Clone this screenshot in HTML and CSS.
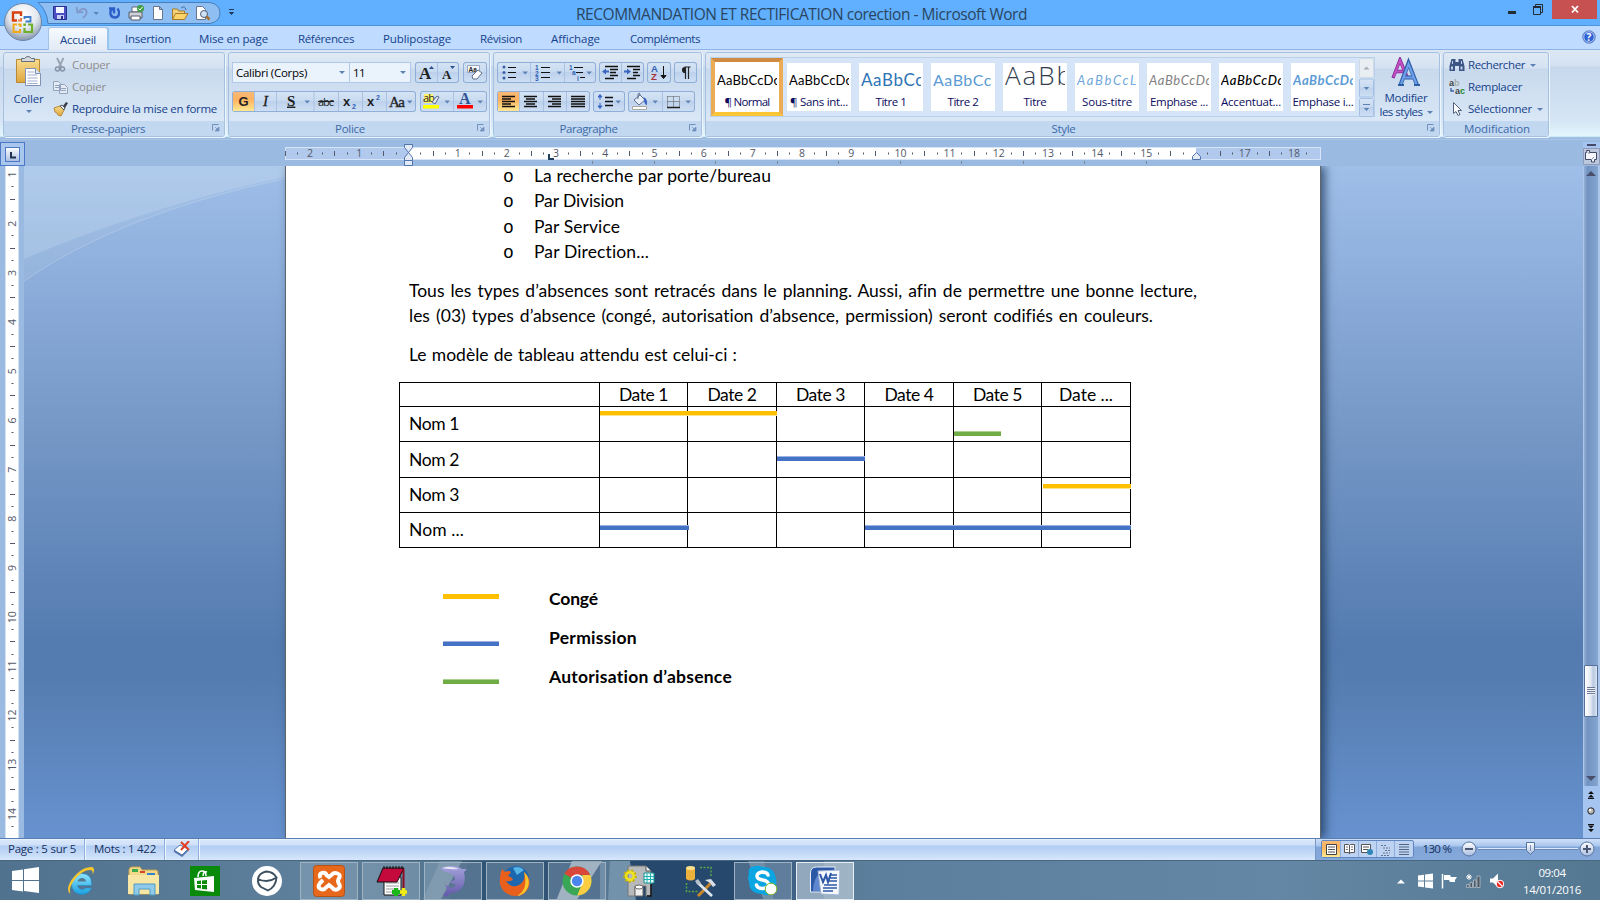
FILE: index.html
```html
<!DOCTYPE html>
<html lang="fr">
<head>
<meta charset="utf-8">
<title>RECOMMANDATION ET RECTIFICATION corection - Microsoft Word</title>
<link rel="stylesheet" href="styles.css">
</head>
<body>
<svg class="defs" width="0" height="0">
  <defs>
    <radialGradient id="orb" cx=".5" cy=".3" r=".7"><stop offset="0" stop-color="#fff"/><stop offset=".55" stop-color="#e3e8ef"/><stop offset="1" stop-color="#8595ab"/></radialGradient>
    <linearGradient id="steel" x1="0" y1="0" x2="0" y2="1"><stop offset="0" stop-color="#fff"/><stop offset="1" stop-color="#a9bde0"/></linearGradient>
    <linearGradient id="btnbg" x1="0" y1="0" x2="0" y2="1"><stop offset="0" stop-color="#d6e4f5"/><stop offset=".45" stop-color="#c9dbf0"/><stop offset=".5" stop-color="#bdd1ec"/><stop offset="1" stop-color="#cfe0f4"/></linearGradient>
    <linearGradient id="hot" x1="0" y1="0" x2="0" y2="1"><stop offset="0" stop-color="#f7b977"/><stop offset=".4" stop-color="#fdb25e"/><stop offset="1" stop-color="#ffe892"/></linearGradient>
    <linearGradient id="gold" x1="0" y1="0" x2="0" y2="1"><stop offset="0" stop-color="#f8dc8f"/><stop offset="1" stop-color="#dfa63c"/></linearGradient>
    <linearGradient id="ieb" x1="0" y1="0" x2="0" y2="1"><stop offset="0" stop-color="#8fe6ff"/><stop offset="1" stop-color="#1a9fe0"/></linearGradient>
    <linearGradient id="dol" x1="0" y1="0" x2="0" y2="1"><stop offset="0" stop-color="#a3a3dc"/><stop offset="1" stop-color="#6257a8"/></linearGradient>
    <path id="car" d="M-2.500-1h5.400L.2 2z" fill="#5c81b5"/>
    <g id="launch"><path d="M.5 6.500v-6h6" fill="none" stroke="#6f8fbd"/><path d="M3 3l3 3M7 3v4H3z" fill="#6f8fbd" stroke="#6f8fbd" stroke-width=".7"/></g>
  </defs>
</svg>

<header class="titlebar">
  <svg class="qat" width="250" height="26" viewBox="0 0 250 26">
    <path d="M38 2.500h172q10 2 10 10.500t-10 10.500H48q-1-13-10-21z" fill="#8fbff2" stroke="#477fbc"/>
    <g transform="translate(53 6)"><path d="M.5.500h13v13H2l-1.500-1.500z" fill="#4a4fc4" stroke="#28308c"/><path d="M3 1h8v6H3z" fill="#f3f6ff"/><path d="M4 9h7v4H4z" fill="#c9cff2"/><path d="M8 10h2v3H8z" fill="#28308c"/></g>
    <path d="M79 11q4-4 7-1 2 4-3 8M76.500 7l1 5.500 5.500-.5" fill="none" stroke="#8199cb" stroke-width="2"/>
    <use href="#car" x="96" y="13"/>
    <path d="M117.500 8.500c3 4 1.500 9-2.500 9-5 0-6-6-2.500-9M109 8.500h5v5" fill="none" stroke="#2d5fc8" stroke-width="2.400"/>
    <g transform="translate(128 6)"><path d="M4 1h7v5H4z" fill="#fff" stroke="#667"/><path d="M1 6h13v6H1z" fill="#cfd3d9" stroke="#555b66"/><path d="M3 10h9v4H3z" fill="#fff" stroke="#555b66"/><circle cx="12.500" cy="2.500" r="3.500" fill="#3e9d42"/><path d="M10.500 2.500l1.500 1.500 2.500-3" fill="none" stroke="#fff"/></g>
    <path d="M153.500 6.500h6l3 3v10h-9zM159.500 6.500v3h3" fill="#fff" stroke="#69758b"/>
    <g transform="translate(172 6)"><path d="M.5 13V3h5l1 2h6v3" fill="#f5d07a" stroke="#a87928"/><path d="M.5 13.500l3-6H16l-3.500 6z" fill="#fbd469" stroke="#a87928"/><path d="M9 2q4-3 5 2" fill="none" stroke="#3c6dad"/></g>
    <g transform="translate(196 6)"><path d="M.5.500h6l3 3v10h-9z" fill="#fff" stroke="#69758b"/><circle cx="8" cy="8" r="3.500" fill="#cfe3f7" stroke="#4d5d76"/><path d="M10.500 10.500l3 3" stroke="#a86f2c" stroke-width="2.500"/></g>
    <path d="M229 9.500h5M229.500 12.500h4l-2 2z" fill="#23395d" stroke="#23395d"/>
  </svg>
  <div class="caption"><span data-w="451">RECOMMANDATION ET RECTIFICATION corection - Microsoft Word</span></div>
  <svg class="winbtns" width="100" height="26" viewBox="0 0 100 26">
    <path d="M8 11h8v3H8z" fill="#222b36"/>
    <path d="M33.500 6.500h7v8h-7zM35.500 6V4.500h7v8H41" fill="none" stroke="#222b36"/><path d="M33 6h8v2h-8z" fill="#222b36"/>
    <path d="M52 0h45v19H52z" fill="#c75050"/><path d="M72 6l6 6.500m0-6.500l-6 6.500" stroke="#fff" stroke-width="1.800"/>
  </svg>
</header>

<nav class="tabs">
  <a class="tab on"><span data-w="36">Accueil</span></a>
  <a class="tab t2"><span data-w="46">Insertion</span></a>
  <a class="tab t3"><span data-w="69">Mise en page</span></a>
  <a class="tab t4"><span data-w="56">Références</span></a>
  <a class="tab t5"><span data-w="68">Publipostage</span></a>
  <a class="tab t6"><span data-w="42">Révision</span></a>
  <a class="tab t7"><span data-w="49">Affichage</span></a>
  <a class="tab t8"><span data-w="70">Compléments</span></a>
  <svg class="help" width="14" height="14" viewBox="0 0 14 14"><circle cx="7" cy="7" r="6.300" fill="#2f63d4" stroke="#7894c6"/><circle cx="7" cy="7" r="5.200" fill="none" stroke="#dce8ff" stroke-width=".7"/><text x="7" y="10.800" class="q">?</text></svg>
</nav>
<svg class="orb" width="40" height="40" viewBox="0 0 40 40">
  <circle cx="20" cy="20" r="18.500" fill="url(#orb)" stroke="#6c84a6"/>
  <g fill="none"><path d="M18 14v-3.500H10v8h4" stroke="#d6430f" stroke-width="2.400"/><path d="M15 18.500h3V16" stroke="#ef7b3c" stroke-width="2"/><path d="M21.500 17v-2h6v4.500h-5" stroke="#3d7cc9" stroke-width="1.800"/><path d="M14 22.500h-3.500v7.500H17v-3M15 22.500h2.500V25" stroke="#f2a916" stroke-width="2"/><path d="M25 22.500h4v7.500H21.500v-4M21.500 24v-1.500H23" stroke="#6eaf2a" stroke-width="2.200"/></g>
</svg>

<section class="ribbon">
  <div class="group g1">
    <div class="gbody clip">
      <div class="paste">
        <svg width="30" height="33" viewBox="0 0 30 33"><path d="M2.500 3.500h23v23h-23z" fill="url(#gold)" stroke="#b98a35"/><path d="M7.500 5.500v-3h3q3.500-4 7 0h3v3z" fill="#d6d9de" stroke="#666d78"/><path d="M11.500 12.500h10l5 5v12h-15z" fill="#fff" stroke="#7f92b5"/><path d="M13.500 16h7m-7 3h10m-10 3h10m-10 3h10m-10 2.500h10" stroke="#9dadd0"/><path d="M21.500 12.500v5h5" fill="#dfe7f5" stroke="#7f92b5"/></svg>
        <span data-w="30">Coller</span><i class="caret"></i>
      </div>
      <div class="cmds">
        <p class="dim"><svg width="16" height="16" viewBox="0 0 16 16"><path d="M4 1l4.500 9M10.500 1L6 10" stroke="#97a2b3" stroke-width="1.800"/><circle cx="4.500" cy="12" r="2" fill="none" stroke="#8792a5" stroke-width="1.400"/><circle cx="9.500" cy="12" r="2" fill="none" stroke="#8792a5" stroke-width="1.400"/></svg><span data-w="38">Couper</span></p>
        <p class="dim"><svg width="16" height="16" viewBox="0 0 16 16"><path d="M.5 2.500h5l2 2v7h-7zM6.500 5.500h5l3 3v6h-8z" fill="#e4ebf5" stroke="#93a3bd"/><path d="M2 6.500h4m-4 2h4m2 1h5m-5 2h5" stroke="#93a3bd"/></svg><span data-w="34">Copier</span></p>
        <p><svg width="16" height="16" viewBox="0 0 16 16"><path d="M1 7l6-2 4 4-3 6-3-1-1-2-2-1z" fill="url(#gold)" stroke="#b98a35"/><path d="M7 5l2-1 3 3-1 2z" fill="#e9edf5" stroke="#555"/><path d="M10 5l3-4 2 1-3 5z" fill="#3b3e48"/></svg><span data-w="145">Reproduire la mise en forme</span></p>
      </div>
    </div>
    <div class="glabel"><span data-w="74">Presse-papiers</span><svg width="8" height="8"><use href="#launch"/></svg></div>
  </div>

  <div class="group g2">
    <div class="gbody tools">
      <div class="row">
        <div class="combo c1"><span data-w="71">Calibri (Corps)</span><i class="caret"></i></div>
        <div class="combo c2"><span data-w="12">11</span><i class="caret"></i></div>
        <svg class="bt m3" width="44" height="21" viewBox="0 0 44 21"><text x="4" y="16.500" class="ser s16">A</text><path d="M14 7l2.500-3 2.500 3z" fill="#2e4f8e"/><path d="M22.500 1v19" stroke="#a9c1e2"/><text x="27" y="16.500" class="ser s12">A</text><path d="M35 4h5l-2.500 3z" fill="#2e4f8e"/></svg>
        <svg class="bt m4" width="24" height="21" viewBox="0 0 24 21"><path d="M4.500 3.500h12v7h-12z" fill="#f5f8fd" stroke="#8597b4" stroke-width=".8"/><text x="5.500" y="9.500" class="aa">Aa</text><path d="M9 14l6-6 4 3-5 6h-4z" fill="#fff" stroke="#5f6f8b"/></svg>
      </div>
      <div class="row r2">
        <svg class="bt" width="184" height="21" viewBox="0 0 184 21"><path d="M1 1h21v19H1z" fill="url(#hot)"/><path d="M22.500 1v19M44.500 1v19M82 1v19M106.500 1v19M130.500 1v19M154.500 1v19" stroke="#a9c1e2"/>
          <text x="6.500" y="15" class="bold s13">G</text><text x="31" y="15" class="ser ital s14 lt">I</text><text x="55" y="14.500" class="ser s14 und">S</text><use href="#car" x="75" y="10.500"/>
          <text x="86" y="14.500" class="s11 strike" textLength="16">abc</text><text x="111" y="15" class="bold s13">x</text><text x="120" y="18" class="tiny">2</text><text x="135" y="15" class="bold s13">x</text><text x="144" y="9" class="tiny">2</text><text x="157" y="15.500" class="ser s14 lt" textLength="16">Aa</text><use href="#car" x="177.500" y="10.500"/></svg>
        <svg class="bt m4" width="67" height="21" viewBox="0 0 67 21"><path d="M33.500 1v19" stroke="#a9c1e2"/><path d="M4 3h9v9H4z" fill="#fff26b"/><text x="3" y="11" class="s11" textLength="12">ab</text><path d="M12 11l5-6 2 1-4 7z" fill="#e3e9f3" stroke="#54698d"/><path d="M3 14h16v3.500H3z" fill="#ff0"/><use href="#car" x="27" y="10.500"/><text x="39" y="13" class="ser s15 blue">A</text><path d="M37 14h16v3.500H37z" fill="#f00"/><use href="#car" x="60" y="10.500"/></svg>
      </div>
    </div>
    <div class="glabel"><span data-w="30">Police</span><svg width="8" height="8"><use href="#launch"/></svg></div>
  </div>

  <div class="group g3">
    <div class="gbody tools">
      <div class="row">
        <svg class="bt" width="99" height="21" viewBox="0 0 99 21"><path d="M33.500 1v19M67.500 1v19" stroke="#a9c1e2"/><g fill="#3a5ea8"><circle cx="7" cy="5" r="1.500"/><circle cx="7" cy="10.500" r="1.500"/><circle cx="7" cy="16" r="1.500"/></g><path d="M11 5.500h8m-8 5h8m-8 5h8M44 5.500h9m-9 5h9m-9 5h9M77 5.500h9m-7 5h7m-3 5h5" stroke="#111"/><use href="#car" x="28" y="10.500"/><use href="#car" x="62" y="10.500"/><use href="#car" x="92" y="10.500"/><g class="num"><text x="38" y="8">1</text><text x="38" y="13.500">2</text><text x="38" y="19">3</text><text x="72" y="7.500">1</text><text x="75" y="13">a</text><text x="80" y="18.500">i</text></g></svg>
        <svg class="bt m3" width="45" height="21" viewBox="0 0 45 21"><path d="M22.500 1v19" stroke="#a9c1e2"/><path d="M6 4.500h13M11 7.500h8M11 10.500h6M11 13.500h8M6 16.500h9M28 4.500h13M34 7.500h7M34 10.500h5M34 13.500h7M28 16.500h9" stroke="#111" stroke-width="1.500"/><path d="M3 9.500l4-3v2h3v2H7v2zM32 9.500l-4-3v2h-3v2h3v2z" fill="#3a66c0"/></svg>
        <svg class="bt m3" width="24" height="21" viewBox="0 0 24 21"><text x="4" y="9.500" class="az b">A</text><text x="4" y="18" class="az r">Z</text><path d="M16.500 4v12M14 13.500l2.500 3 2.500-3z" stroke="#111" fill="#111"/></svg>
        <svg class="bt m3" width="23" height="21" viewBox="0 0 23 21"><path d="M10.500 5h6M11 10.500a2.500 2.500 0 010-5zM11.500 5v12M14.500 5v12" fill="#222" stroke="#222" stroke-width="1.200"/></svg>
      </div>
      <div class="row r2">
        <svg class="bt" width="93" height="21" viewBox="0 0 93 21"><path d="M1 1h21v19H1z" fill="url(#hot)"/><path d="M22.500 1v19M46.500 1v19M69.500 1v19" stroke="#a9c1e2"/><path d="M5 5.500h13M5 8h9M5 10.500h13M5 13h9M5 15.500h13M27 5.500h13M29 8h9M27 10.500h13M29 13h9M27 15.500h13M51 5.500h13M55 8h9M51 10.500h13M55 13h9M51 15.500h13M74 5.500h14M74 8h14M74 10.500h14M74 13h14M74 15.500h14" stroke="#111" stroke-width="1.400"/></svg>
        <svg class="bt m3" width="32" height="21" viewBox="0 0 32 21"><path d="M7 4v5M7 12v5M5 6l2-2.500L9 6zM5 15l2 2.500L9 15z" stroke="#3a66c0" fill="#3a66c0"/><path d="M12 6.500h8m-8 4h8m-8 4h8" stroke="#111" stroke-width="1.300"/><use href="#car" x="25" y="10.500"/></svg>
        <svg class="bt m3" width="67" height="21" viewBox="0 0 67 21"><path d="M34.500 1v19" stroke="#a9c1e2"/><path d="M6 9l6-5 5 5-6 5z" fill="#e9eff8" stroke="#5c6f90"/><path d="M10 8V3q2-2 2 1" fill="none" stroke="#5c6f90"/><path d="M15.500 6q4.500 2 3.500 8-2 0-3-4z" fill="#3a66c0"/><path d="M4.500 15.500h14v3h-14z" fill="#fff" stroke="#a8a8a0"/><use href="#car" x="27" y="10.500"/><path d="M39.500 5.500h12v11m-12-11v11m6-11v11m-6-6h12" stroke="#555" stroke-dasharray="1 1" fill="none"/><path d="M39 16.500h13" stroke="#222" stroke-width="1.400"/><use href="#car" x="60" y="10.500"/></svg>
      </div>
    </div>
    <div class="glabel"><span data-w="58">Paragraphe</span><svg width="8" height="8"><use href="#launch"/></svg></div>
  </div>

  <div class="group g4">
    <div class="gbody styles">
      <div class="gallery">
        <div class="st sel"><b class="cal"><span data-w="63">AaBbCcDc</span></b><em><span data-w="45">¶ Normal</span></em></div>
        <div class="st"><b class="cal"><span data-w="63">AaBbCcDc</span></b><em><span data-w="58">¶ Sans int...</span></em></div>
        <div class="st"><b class="h1"><span data-w="63">AaBbCc</span></b><em><span data-w="31">Titre 1</span></em></div>
        <div class="st"><b class="h2"><span data-w="59">AaBbCc</span></b><em><span data-w="31">Titre 2</span></em></div>
        <div class="st"><b class="h0"><span data-w="69">AaBb</span></b><em><span data-w="23">Titre</span></em></div>
        <div class="st"><b class="sub"><span data-w="61">AaBbCcL</span></b><em><span data-w="50">Sous-titre</span></em></div>
        <div class="st"><b class="cal ig"><span data-w="63">AaBbCcDc</span></b><em><span data-w="58">Emphase ...</span></em></div>
        <div class="st"><b class="cal ib"><span data-w="63">AaBbCcDc</span></b><em><span data-w="60">Accentuat...</span></em></div>
        <div class="st"><b class="cal ie"><span data-w="63">AaBbCcDc</span></b><em><span data-w="61">Emphase i...</span></em></div>
        <svg class="gscroll" width="15" height="59" viewBox="0 0 15 59"><rect x=".5" y=".5" width="14" height="19" rx="2" fill="#e9eef3" stroke="#d0dae6"/><rect x=".5" y="21" width="14" height="18" rx="1" fill="url(#btnbg)" stroke="#a5c0e4"/><rect x=".5" y="40.500" width="14" height="18" rx="1" fill="url(#btnbg)" stroke="#a5c0e4"/><path d="M4.500 11.500h6l-3-3z" fill="#a5acb5"/><use href="#car" x="7.300" y="30"/><path d="M4 46.500h7" stroke="#5c81b5"/><use href="#car" x="7.300" y="51"/></svg>
      </div>
      <div class="modif"><svg width="30" height="30" viewBox="0 0 30 30"><g fill="none" stroke="#872c9a" stroke-width="3.400"><path d="M2 21L9 3l7 17M4 14.500h9"/></g><path d="M2.500 20L9 3.500l7 16.500M5 14.500h8" fill="none" stroke="#c14fc2" stroke-width="2"/><path d="M9.500 28L17.500 6 26 28M12.500 20.500h11" fill="none" stroke="#2d5ea8" stroke-width="4"/><path d="M10 27L17.500 7 25.500 27M13 20.500h10" fill="none" stroke="#6da0e8" stroke-width="2.200"/><path d="M7 28h6m10 0h6" stroke="#2d5ea8" stroke-width="2"/></svg><span data-w="43">Modifier</span><div class="ls"><span data-w="43">les styles</span><i class="caret"></i></div></div>
    </div>
    <div class="glabel"><span data-w="24">Style</span><svg width="8" height="8"><use href="#launch"/></svg></div>
  </div>

  <div class="group g5">
    <div class="gbody cmds find">
      <p><svg width="16" height="14" viewBox="0 0 16 14"><path d="M2.500 1h4v3h3V1h4l2 7v5H10V8H6v5H.500V8z" fill="#3e5685"/><path d="M3 3h1v3H3zM12 3h1v3h-1zM2 8.500h2v3H2zM11.500 8.500h2v3h-2z" fill="#c3d2ea"/></svg><span data-w="57">Rechercher</span><i class="caret"></i></p>
      <p><svg width="16" height="16" viewBox="0 0 16 16"><text x="0" y="7" class="ab">a<tspan fill="#aaa">b</tspan></text><text x="6" y="15" class="ab">a<tspan fill="#1d8a2b">c</tspan></text><path d="M2 9v3h3" fill="none" stroke="#3a5ea8" stroke-width="1.300"/></svg><span data-w="54">Remplacer</span></p>
      <p><svg width="16" height="16" viewBox="0 0 16 16"><path d="M4.500 1.500v11l2.500-2 2 4 2-1-2-4h3.500z" fill="#fff" stroke="#50617f"/></svg><span data-w="64">Sélectionner</span><i class="caret"></i></p>
    </div>
    <div class="glabel"><span data-w="66">Modification</span></div>
  </div>
</section>

<div class="rulerbar">
  <div class="corner"><svg width="15" height="15" viewBox="0 0 15 15"><rect x=".5" y=".5" width="14" height="14" fill="url(#steel)" stroke="#4c78c6"/><path d="M6 5v5.500h5" fill="none" stroke="#1f3350" stroke-width="2"/></svg></div>
  <svg id="hruler" width="1040" height="24" viewBox="284 142 1040 24"></svg>
  <svg class="rb" width="17" height="24" viewBox="0 0 17 24"><path d="M0 0h17v6H0z" fill="#a6c4f0"/><path d="M4 2h9v2H4z" fill="#454a68"/><path d="M.5 6.500h16v16H.500z" fill="#bcc7dd" stroke="#8f9bb8"/><path d="M2.500 10.500h1v-2h3v2h7v7h-2v2.500h-3v-2.500h-6z" fill="#f4f6fb" stroke="#3f4a6b"/><path d="M3.500 9l3 3M8 18l3-3" stroke="#8a93a8"/></svg>
</div>

<main class="work">
  <div class="vr"><svg id="vruler" width="14" height="672" viewBox="5 166 14 672"></svg></div>
  <div class="canvas">
    <svg class="swoosh" width="261" height="120" viewBox="24 166 261 120"><path d="M24 166h261v11Q150 206 24 259z" fill="#dcebf2" opacity=".28"/><path d="M24 259Q150 206 285 177v1.500Q120 214 24 281z" fill="#c8dbe0" opacity=".14"/><path d="M24 281Q120 214 285 178.500" fill="none" stroke="#c3d8f0" opacity=".45"/></svg>
    <article class="page">
      <ul class="list">
        <li><span data-w="237">La recherche par porte/bureau</span></li>
        <li><span data-w="90">Par Division</span></li>
        <li><span data-w="86">Par Service</span></li>
        <li><span data-w="115">Par Direction...</span></li>
      </ul>
      <p class="l1">Tous les types d’absences sont retracés dans le planning. Aussi, afin de permettre une bonne lecture,</p>
      <p class="l2">les (03) types d’absence (congé, autorisation d’absence, permission) seront codifiés en couleurs.</p>
      <p class="l3">Le modèle de tableau attendu est celui-ci :</p>
      <table>
        <colgroup><col class="k0"><col class="k1"><col class="k2"><col class="k1"><col class="k2"><col class="k1"><col class="k2"></colgroup>
        <tr class="h"><td></td><td><span data-w="49">Date 1</span></td><td><span data-w="49">Date 2</span></td><td><span data-w="49">Date 3</span></td><td><span data-w="49">Date 4</span></td><td><span data-w="49">Date 5</span></td><td><span data-w="54">Date ...</span></td></tr>
        <tr class="a"><th><span data-w="50">Nom 1</span></th><td><i class="bar y two"></i></td><td></td><td></td><td></td><td><i class="bar g"></i></td><td></td></tr>
        <tr class="b"><th><span data-w="50">Nom 2</span></th><td></td><td></td><td><i class="bar u mid"></i></td><td></td><td></td><td></td></tr>
        <tr class="a"><th><span data-w="50">Nom 3</span></th><td></td><td></td><td></td><td></td><td></td><td><i class="bar y one"></i></td></tr>
        <tr class="a"><th><span data-w="55">Nom ...</span></th><td><i class="bar u low"></i></td><td></td><td></td><td><i class="bar u low three"></i></td><td></td><td></td></tr>
      </table>
      <div class="legend">
        <div><i class="y"></i><span data-w="49">Congé</span></div>
        <div><i class="u"></i><span data-w="88">Permission</span></div>
        <div><i class="g"></i><span data-w="183">Autorisation d’absence</span></div>
      </div>
    </article>
  </div>
  <div class="vscroll">
    <div class="track"><i class="up"></i><div class="thumb"></div><i class="down"></i></div>
    <svg width="17" height="52" viewBox="0 0 17 52"><path d="M5 8l3-3 3 3zM5 11.500l3-3 3 3zM5 12h6v1H5zM5 38h6v1H5zM5 39.500h6l-3 3zM5 43h6l-3 3z" fill="#111"/><circle cx="8" cy="25" r="3.200" fill="#bbb" stroke="#222"/><circle cx="7" cy="24" r="1.200" fill="#fff"/></svg>
  </div>
</main>

<footer class="status">
  <div class="s1"><span data-w="68">Page : 5 sur 5</span></div>
  <div class="s2"><span data-w="62">Mots : 1 422</span></div>
  <div class="s3"><svg width="18" height="16" viewBox="0 0 18 16"><path d="M1 9l6-5 8 4-6 6z" fill="#fff" stroke="#5776ae"/><path d="M1 10l8 5 6-6" fill="none" stroke="#5776ae" stroke-width="1.500"/><path d="M8 1l8 8m0-9L8 9" stroke="#e23f26" stroke-width="2"/></svg></div>
  <div class="sr">
    <svg width="284" height="21" viewBox="1316 839 284 21">
      <rect x="1321.500" y="840.500" width="92" height="17" rx="1.500" fill="#bdd3f1" stroke="#5f86bf"/><path d="M1322 841h18v16h-18z" fill="url(#hot)"/><path d="M1340.500 841v16M1358.500 841v16M1376.500 841v16M1394.500 841v16" stroke="#8daddb"/>
      <path d="M1326.500 844.500h10v10h-10z" fill="#fff" stroke="#444"/><path d="M1328 847h7m-7 2.500h7m-7 2.500h7" stroke="#555"/>
      <path d="M1344.500 844.500h4l1 1 1-1h4v8h-4l-1 1.500-1-1.500h-4zM1349.500 845v8" fill="#fff" stroke="#555"/><path d="M1346 847h2m-2 2.500h2m3-2.500h2m-2 2.500h2" stroke="#777"/>
      <path d="M1361.500 844.500h9v8h-9z" fill="#fff" stroke="#555"/><path d="M1363 847h6m-6 2.500h5" stroke="#555"/><circle cx="1370" cy="852" r="3" fill="#2f86b6"/>
      <path d="M1381 845.500h5m-3 2.500h7m-5 2.500h5m-7 2.500h7m-9 2.500h9" stroke="#66758e" stroke-dasharray="2 1"/>
      <path d="M1399 844.500h10m-10 2.500h10m-10 2.500h10m-10 2.500h10m-10 2.500h10" stroke="#556481"/>
      <text x="1422.500" y="853" textLength="29.500" class="zt">130 %</text>
      <path d="M1478 848.500h100" stroke="#dbe7fa"/><path d="M1478 849.500h100" stroke="#6587bb"/>
      <g stroke="#54739f"><circle cx="1469" cy="849" r="7" fill="url(#steel)"/><circle cx="1587" cy="849" r="7" fill="url(#steel)"/><path d="M1526.500 842.500h8v8l-4 4-4-4z" fill="url(#steel)"/></g>
      <path d="M1465 849h8M1583 849h8M1587 845v8" stroke="#4a5872" stroke-width="2"/><path d="M1530.500 845v6" stroke="#7b93bb"/>
    </svg>
  </div>
</footer>

<div class="taskbar">
  <svg class="photo" width="1600" height="40" viewBox="0 0 1600 40" preserveAspectRatio="none"><path d="M440 0h30l-22 40h-26z" fill="#8199ad" opacity=".5"/><path d="M462 0h138v40H440z" fill="#25486c" opacity=".75"/><path d="M572 0h30l-26 40h-20z" fill="#b9c6d0" opacity=".75"/><path d="M610 0h20l8 40h-30z" fill="#7f9db5" opacity=".7"/><path d="M630 0h118l16 40H636z" fill="#1d3f66" opacity=".85"/><path d="M764 0h60v40h-50z" fill="#34597f" opacity=".7"/></svg>
  <div class="tk n w1"><svg width="27" height="27" viewBox="0 0 27 27"><path d="M0 4l11-1.500V13H0zM12 2.300L27 0v13H12zM0 14h11v10.500L0 23zM12 14h15v12l-15-2z" fill="#fff"/></svg></div>
  <div class="tk n"><svg width="30" height="32" viewBox="0 0 30 32"><path d="M25.500 18q0-9-9.500-9.500Q6 9 5.500 19 6 29 16 29.500q7-.5 9.500-6.500h-6q-4 3.500-7.500-1l-.5-1.500h14z" fill="url(#ieb)" stroke="#2389c4" stroke-width=".6"/><path d="M11.500 16.500q1-3.500 4.500-3.500t4 3.500z" fill="#56788f"/><path d="M4.500 29C-4 24 12 1 26 2q4 1 .5 8 1-5-2.500-5C14 5 1 21 4.500 29z" fill="#f7c62c"/></svg></div>
  <div class="tk n"><svg width="33" height="31" viewBox="0 0 33 31"><path d="M2 5q0-3 3-3h8l2 3h14q2 0 2 3v21H2z" fill="#f2d98a" stroke="#c7a24c"/><path d="M5 4h6v3H5z" fill="#3ca94b"/><path d="M13 6h5v2h-5z" fill="#d9432d"/><path d="M20 8h8v2h-8z" fill="#3480c9"/><path d="M1 10h31v19H1z" fill="#f8e6a5"/><path d="M7 30V19h21v11h-5v-6H12v6z" fill="#8ecbe8" stroke="#4e9ac6"/></svg></div>
  <div class="tk n"><svg width="30" height="30" viewBox="0 0 30 30"><path d="M0 0h30v30H0z" fill="#0a8a0a"/><path d="M4 12l20-2v16L5 24z" fill="#fff"/><path d="M8 11q0-6 4-6t4 5M13 10q0-5 4-4" fill="none" stroke="#fff" stroke-width="1.500"/><path d="M7 15l4-.5v3.500H7zM12 14.500l5-.5v4h-5zM7 19h4v3.500l-4-.5zM12 19h5v4.500l-5-.5z" fill="#0a8a0a"/></svg></div>
  <div class="tk n"><svg width="32" height="32" viewBox="0 0 32 32"><circle cx="16" cy="16" r="15" fill="#fff"/><path d="M7 14q1-6 8-7.500 7 0 10.500 6-5 3.500-10 3.500-5 0-8.500-2zM7 14q-.5 5 3 8l7 3.500q8-4 8.500-13" fill="none" stroke="#3d5060" stroke-width="1.900"/></svg></div>
  <div class="tk o"><svg width="32" height="32" viewBox="0 0 32 32"><rect x=".5" y=".5" width="31" height="31" rx="3" fill="#e8681b" stroke="#b55317"/><path d="M7.500 13q-2-4 1.500-5t4.500 2l2.500 2 2.500-2q2-3 6-1.500t1 5.500q-1 2 0 4 3 4-.5 6t-6-1.500L16 20l-3 2.500q-2 3-5.500 1.500T7 18l3-3" fill="none" stroke="#fff" stroke-width="4"/></svg></div>
  <div class="tk o"><svg width="32" height="32" viewBox="0 0 32 32"><path d="M9 12h17v18H9z" fill="#fff" stroke="#111"/><path d="M11 18h13m-13 3h13m-13 3h13m-13 3h13" stroke="#999"/><path d="M8 3h21l-7 14H2z" fill="#c40a3c" stroke="#111"/><path d="M9 1v3m3-3v3m3-3v3m3-3v3m3-3v3m3-3v3m3-3v3" stroke="#111"/><path d="M28.500 4v19" stroke="#8b0b25" stroke-width="2"/><path d="M17 27h8m-4-4v8" stroke="#18b818" stroke-width="4"/><path d="M25 27h7m-3.500-4v8" stroke="#f1ee16" stroke-width="3.500"/></svg></div>
  <div class="tk o"><svg width="30" height="32" viewBox="0 0 30 32"><path d="M2 4q4-3 12-3 7 0 10 3l5 0-3 3q2 8-1 14-4 7-12 7l-5 4-3-2 4-5-2-6 6 4q3 0 5-3l-7-3 6-2q0-4-3-6Q8 8 2 4z" fill="url(#dol)"/><path d="M4 3q8-3 17 1-8 1-17-1z" fill="#e4e4f5"/></svg></div>
  <div class="tk o"><svg width="32" height="32" viewBox="0 0 32 32"><circle cx="17" cy="14" r="13" fill="#1d67ae"/><path d="M14 3q6-3 11 2l-7 5z" fill="#56b5e4"/><path d="M3 4l3 3q4-2 6 0l-3 4q4 1 5 4-4 2-7 1 5 8 13 4 7-4 5-13 7 6 5 14-3 10-14 10Q4 30 1 19 0 11 3 4z" fill="#e8601c"/><path d="M25 7q7 7 4 15-3 8-11 9 12-7 7-24z" fill="#fbc52e"/></svg></div>
  <div class="tk o"><svg width="30" height="30" viewBox="0 0 30 30"><circle cx="15" cy="15" r="14.500" fill="#3aa757"/><path d="M15 15L2.400 7.700A14.500 14.500 0 0127.600 7.700L28 9H15z" fill="#d8473a"/><path d="M20.500 9h7.700a14.500 14.500 0 01-13 20.500L20 18z" fill="#fbcd43"/><circle cx="15" cy="15" r="6.700" fill="#fff"/><circle cx="15" cy="15" r="5.200" fill="#4a86ee"/></svg></div>
  <div class="tk n"><svg width="32" height="32" viewBox="0 0 32 32"><path d="M5 1h18l5 5v25h-5V21H12v10H5z" fill="#b7b9bb" stroke="#777"/><path d="M23 1v5h5" fill="#eee" stroke="#555"/><circle cx="7" cy="11" r="4" fill="none" stroke="#f1e31c" stroke-width="3"/><circle cx="7" cy="11" r="5.800" fill="none" stroke="#c5b500" stroke-width="2" stroke-dasharray="2 2"/><path d="M21 8h10v10H21z" fill="#e8ffff" stroke="#178d92"/><path d="M21 11.500h10m-10 3h10m-7-6v10m3.500-10v10" stroke="#20b0b0"/><path d="M12 22h8v9h-8z" fill="#eee" stroke="#666"/><ellipse cx="16" cy="22" rx="4" ry="2" fill="#fff" stroke="#666"/><path d="M28 19v12h-4" fill="none" stroke="#111" stroke-width="1.500"/></svg></div>
  <div class="tk n"><svg width="32" height="32" viewBox="0 0 32 32"><path d="M1 3q5-3 9 0v11q-4 3-9 0z" fill="#edb23c"/><ellipse cx="5.500" cy="3" rx="4.500" ry="2" fill="#fbe08c"/><path d="M15 2.500h11v10M1.500 18v8.500h11" fill="none" stroke="#58a746" stroke-width="1.500" stroke-dasharray="2 1.500"/><path d="M13 31l13-13" stroke="#c8862d" stroke-width="3"/><path d="M20 15l6-1 5 6-3 2-3-4z" fill="#d7dde6"/><path d="M12 17l15 14" stroke="#dfe5ec" stroke-width="2.800"/><path d="M10 16l3-2 3 4-3 2z" fill="#b6c0cb"/></svg></div>
  <div class="tk o"><svg width="32" height="32" viewBox="0 0 32 32"><path d="M2 9Q0 2 8 1q4-1 7 1 12-1 14 12 1 3 0 5 1 9-7 11-4 1-6-1Q2 29 2 17 0 12 2 9z" fill="#0ba5e2"/><path d="M21 10q-1-3-6-3-5 1-5 4 0 3 5.500 4 6 1 6 4.500-1 4-6 4-5 0-6-3.500" fill="none" stroke="#fff" stroke-width="3.500" stroke-linecap="round"/><circle cx="24" cy="24" r="5.800" fill="#fff" stroke="#83b82e"/></svg></div>
  <div class="tk o act"><svg width="32" height="30" viewBox="0 0 32 30"><path d="M1.500 26V7q0-6 6-6H26v25z" fill="#2b57a7" stroke="#e9eefa"/><path d="M4 25Q4 12 13 4v21z" fill="#5e87cf"/><path d="M9 5l22-1-1 25-18-1z" fill="#f5f8fd" stroke="#9eb2d4"/><path d="M11 8l3 8 3-7 2 7 3-9" fill="none" stroke="#2b57a7" stroke-width="2"/><path d="M22 9h6m-7 3h7m-8 3h8m-13 4h13m-14 3h14m-14 3h10" stroke="#2b57a7" stroke-width="1.500"/></svg></div>
  <svg class="tray" width="110" height="20" viewBox="0 0 110 20"><path d="M3 12.500h8l-4-4z" fill="#fff"/><path d="M24 4.500l6-.8V9.500h-6zM31 3.500l8-1v7h-8zM24 10.500h6v5.800l-6-.8zM31 10.500h8v7l-8-1z" fill="#fff"/><path d="M48.500 3v14.500" stroke="#fff" stroke-width="1.500"/><path d="M50 4h6l1 2h6l-2 3v2h-5l-1-2h-5z" fill="#fff"/><path d="M72.500 16.500h2.500v-3h-2.500zm3.500 0h2.500v-5H76zm3.500 0H82V9h-2.500zm3.500 0h3V5h-3z" fill="#4d5a66" stroke="#c0c8ce" stroke-width=".7"/><path d="M75 3v6m-3-3h6m-5-2l4 4m0-4l-4 4" stroke="#fff"/><path d="M96 7.500h3l5-5v14l-5-5h-3z" fill="#fff"/><circle cx="106" cy="13" r="3.800" fill="#e22" stroke="#fff"/><path d="M103.500 10.500l5 5" stroke="#fff" stroke-width="1.300"/></svg>
  <div class="clock"><span data-w="27">09:04</span><span data-w="58">14/01/2016</span></div>
</div>
<script src="script.js"></script>
</body>
</html>
```
FILE: styles.css
```css
* { box-sizing: border-box; }
body { margin: 0; width: 1600px; height: 900px; overflow: hidden; position: relative; display: flex; flex-direction: column; font: 11.5px/14px "Open Sans", "Noto Sans", sans-serif; color: #15428b; background: #9bbae1; }
p, ul { margin: 0; padding: 0; }
svg { display: block; flex: none; }
.defs { position: absolute; }
[data-w] { display: inline-block; white-space: pre; }
.caret { display: inline-block; border: 3px solid transparent; border-top: 3px solid #5c81b5; border-bottom: 0; }

.titlebar { height: 26px; background: #60b0ff; border-bottom: 1px solid #4a96e0; display: flex; justify-content: space-between; flex: none; }
.caption { width: 451px; margin-left: 326px; flex: none; font-size: 15.5px; line-height: 28px; color: #2b4560; margin-right: auto; }
.orb { position: absolute; left: 3px; top: 2px; }

.tabs { height: 24px; background: #bfdbff; display: flex; padding-left: 48px; flex: none; line-height: 26px; border-bottom: 1px solid #8db2e3; }
.tab { margin-left: 29px; }
.tab.on { width: 60px; height: 23px; margin: 1px 0 0; text-align: center; line-height: 23px; background: linear-gradient(#f6faff, #e1eaf6); border: 1px solid #a3c2ea; border-bottom: 0; border-radius: 3px 3px 0 0; box-shadow: 1px 0 1px #8cc8e8; }
.t2 { margin-left: 17px; }
.t3 { margin-left: 28px; }
.t4 { margin-left: 30px; }
.t8 { margin-left: 30px; }
.help { margin: 4px 4px 0 auto; }
.q { font: bold 10px "Open Sans", sans-serif; fill: #fff; text-anchor: middle; }

.ribbon { height: 90px; display: flex; padding: 2px 0 0 3px; flex: none; background: linear-gradient(#dde8f5 0, #d3e1f2 16px, #c7d8ed 17px, #d5e5f5 70px, #e3f6fd 86px, #8eb4dc 88px, #a3bfe3 89px, #b2cbe9 90px); }
.group { height: 85px; border: 1px solid #a6c1df; border-radius: 3px; box-shadow: 1px 1px 0 #eef6fd; margin-right: 3px; display: flex; flex-direction: column; background: linear-gradient(#dfe9f5 0, #d5e2f1 15px, #c8d9ed 16px, #d9e7f6 68px); flex: none; }
.g1 { width: 222px; }
.g2 { width: 262px; }
.g3 { width: 209px; }
.g4 { width: 735px; }
.g5 { width: 106px; }
.gbody { height: 68px; flex: none; }
.glabel { height: 15px; flex: none; background: #c1d8f0; display: flex; align-items: center; justify-content: center; color: #3e6aaa; position: relative; line-height: 15px; border-radius: 0 0 2px 2px; }
.glabel svg { position: absolute; right: 4px; top: 3px; }
.glabel span { margin-right: 18px; }
.g1 .glabel span { margin-right: 12px; }
.g5 .glabel span { margin-right: 0; margin-left: 2px; }

.clip { display: flex; }
.paste { width: 48px; padding: 3px 0 0 1px; display: flex; flex-direction: column; align-items: center; line-height: 17px; }
.paste span { margin-top: 1px; }
.paste .caret { margin-top: 3px; }
.cmds { padding-top: 1px; }
.cmds p { display: flex; align-items: center; height: 22px; gap: 3px; }
.clip .cmds p { padding-left: 1px; }
.cmds .caret { margin-left: 2px; }
.dim { color: #8d8d8d; }
.find { padding-left: 5px; }

.tools { padding: 9px 0 0 3px; }
.row { display: flex; height: 21px; }
.r2 { margin-top: 8px; }
.combo { height: 21px; border: 1px solid #b0c9e8; background: #eaf2fb; color: #000; display: flex; align-items: center; justify-content: space-between; padding: 0 4px 0 3px; }
.c1 { width: 118px; }
.c2 { width: 61px; border-left: 0; margin-right: 1px; }
.bt { border-radius: 3px; background: linear-gradient(#d6e4f5, #c9dbf0 45%, #bdd1ec 50%, #cfe0f4); box-shadow: inset 0 0 0 1px #8fafd9; }
.m3 { margin-left: 3px; }
.m4 { margin-left: 4px; }
.ser { font-family: "Liberation Serif", serif; font-weight: bold; fill: #222; }
.s16 { font-size: 17px; } .s15 { font-size: 16px; } .s14 { font-size: 15px; } .s13 { font-size: 13px; } .s12 { font-size: 13px; } .s11 { font-size: 11px; fill: #222; }
.lt { font-weight: normal; stroke: #222; stroke-width: .3px; }
.bold { font-weight: bold; font-family: "Liberation Sans", sans-serif; fill: #222; }
.ital { font-style: italic; }
.und { text-decoration: underline; }
.strike { text-decoration: line-through; }
.blue { fill: #2f5597; }
.tiny { font: bold 7px "Liberation Sans", sans-serif; fill: #2e5fb4; }
.aa { font: bold 6.5px "Liberation Sans", sans-serif; fill: #222; }
.num { font: bold 6.5px "Liberation Sans", sans-serif; fill: #2e5fb4; }
.az { font: bold 9.5px "Liberation Sans", sans-serif; }
.az.b { fill: #2e5fb4; }
.az.r { fill: #a8323a; }
.ab { font: bold 9px "Liberation Sans", sans-serif; fill: #444; }

.styles { display: flex; padding: 4px 0 0 4px; }
.gallery { width: 665px; height: 60px; border: 1px solid #b9d0ed; background: #d5e5f7; display: flex; flex: none; }
.st { width: 72px; height: 58px; flex: none; border: 4px solid #d5e5f7; border-top-width: 5px; border-bottom-width: 5px; background: #fff; text-align: center; color: #000; }
.st b { display: block; width: 62px; height: 30px; font: 13px/34px Lato, sans-serif; overflow: hidden; text-align: left; margin-left: 2px; width: 60px; }
.st em { display: block; font-style: normal; color: #0a0a5e; line-height: 18px; margin: 0 -2px; white-space: nowrap; }
.st.sel { border: 4px solid; border-color: #d08a42 #ecab55 #f9c636; padding-top: 1px; }
.st .h1 { font-size: 17px; color: #2e74b5; }
.st .h2 { font-size: 16px; color: #5b9bd5; }
.st .h0 { font: 300 26px/25px "Open Sans", sans-serif; color: #323e4f; }
.st .sub { font-style: italic; color: #6fa8dc; }
.st .ig { font-style: italic; color: #808080; }
.st .ib { font-style: italic; font-weight: 500; }
.st .ie { font-style: italic; font-weight: bold; color: #5b9bd5; }
.gscroll { margin-left: auto; }
.modif { width: 62px; display: flex; flex-direction: column; align-items: center; line-height: 14px; }
.modif > span { margin-top: 4px; }
.ls { display: flex; align-items: center; gap: 4px; }

.rulerbar { height: 26px; padding-top: 2px; display: flex; flex: none; background: #9bbae1; }
.corner { width: 25px; height: 24px; border: 1px solid #4c78c6; background: #a9c6ee; padding: 4px; }
#hruler { margin-left: 259px; }
.rb { margin-left: auto; }
.rt { font: 10.5px "Open Sans", sans-serif; fill: #53596a; text-anchor: middle; }

.work { height: 672px; display: flex; flex: none; }
.vr { width: 24px; padding-left: 5px; background: #9bbae1; }
.canvas { width: 1559px; position: relative; background: linear-gradient(#9fbfe9 0, #88a9d7 145px, #7396c5 275px, #547bb0 480px, #557db1 515px, #6792cf 672px); padding-left: 261px; overflow: hidden; }
.swoosh { position: absolute; left: 0; top: 0; }
.page { display: flow-root; width: 1036px; height: 672px; background: #fff; border: solid #5f6468; border-width: 0 1px; box-shadow: 4px 0 9px rgba(20, 45, 75, .7); padding-left: 113px; font: 17.5px/25px Lato, sans-serif; font-variant-ligatures: none; color: #000; position: relative; }
.list { list-style: none; padding: 0 0 0 108px; height: 101px; margin-top: -3px; }
.list li { height: 25.3px; display: flex; }
.list li::before { content: "o"; width: 27px; margin-left: -4px; margin-right: 4px; font: 18px/28px "Liberation Mono", monospace; }
.page p { padding-left: 10px; white-space: nowrap; text-align-last: justify; }
.page .l1 { margin-top: 14px; width: 798px; }
.page .l2 { width: 754px; }
.page .l3 { margin-top: 14px; width: 338px; }
table { border-collapse: collapse; table-layout: fixed; width: 732px; margin-top: 15px; }
.k0 { width: 200px; } .k1 { width: 88px; } .k2 { width: 89px; }
td, th { border: 1px solid #000; padding: 0; text-align: center; position: relative; font-weight: normal; line-height: 22px; }
th { text-align: left; padding-left: 9px; }
.h { height: 24px; } .a { height: 35px; } .b { height: 36px; }
.bar { position: absolute; left: 0; top: 4px; height: 5px; width: 89px; }
.y { background: #ffc000; border-bottom: 1px solid #ffe490; }
.u { background: #4472c4; border-top: 1px solid #9db4e0; }
.g { background: #70ad47; border-top: 1px solid #a9d08e; }
.two { width: 177px; z-index: 1; }
.bar.g { top: 24px; width: 47px; }
.mid { top: 14px; width: 88px; }
.one { top: 6px; left: 1px; width: 88px; }
.low { top: 12px; z-index: 1; }
.three { width: 266px; }
.legend { padding: 38px 0 0 44px; font-weight: bold; }
.legend div { display: flex; height: 39px; }
.legend i { width: 56px; height: 5px; margin: 8px 50px 0 0; border-bottom: 0; }
.legend .u { margin-top: 16px; }
.legend .g { margin-top: 15px; }

.vscroll { width: 17px; background: #a6c4f0; }
.track { height: 620px; border: solid #adc6ec; border-width: 0 2px 0 1px; background: linear-gradient(90deg, #93afd6, #7394c2 25%, #7ea0cb 80%, #86a7d2); display: flex; flex-direction: column; align-items: center; padding-top: 5px; }
.up { border: 5px solid transparent; border-top: 0; border-bottom: 5px solid #48506e; }
.down { border: 5px solid transparent; border-bottom: 0; border-top: 5px solid #48506e; margin-top: 59px; }
.thumb { width: 14px; height: 52px; margin-top: 489px; flex: none; border: 1px solid #57719c; border-radius: 1px; background: repeating-linear-gradient(#6c7a94 0 1px, #eef2f8 1px 2px) center / 8px 8px no-repeat, linear-gradient(90deg, #fff, #e4eaf3 45%, #b9c9e0 70%, #dbe5f3); }

.status { height: 22px; display: flex; flex: none; border-top: 1px solid #567fb0; background: linear-gradient(#f4f9ff 0, #d9e7fa 1px, #cfe0f7 6px, #b1cdf3 7px, #cbdef8 17px, #d8e8fc 21px); color: #15305e; line-height: 20px; }
.s1, .s2, .s3 { border-right: 1px solid #8fb0dd; box-shadow: 1px 0 0 #eff6ff; height: 21px; }
.s1 { width: 85px; padding-left: 8px; }
.s2 { width: 80px; padding-left: 9px; }
.s3 { width: 34px; padding: 2px 0 0 8px; }
.sr { margin-left: auto; background: linear-gradient(#cfe0f8, #a9c6ee 7px, #82a5d8 8px, #86a9dc 21px); box-shadow: -1px 0 0 #7797c4; }
.zt { font: 11.5px "Open Sans", sans-serif; fill: #15305e; }

.taskbar { height: 40px; flex: none; display: flex; align-items: center; position: relative; background: linear-gradient(90deg, #50728f, #5f809c 20%, #557792 26%, #587a96 50%, #5c7f9d 55%, #6387a4 80%, #557892); border-top: 1px solid #48677f; }
.photo { position: absolute; left: 0; top: 0; }
.tk { width: 58px; height: 38px; margin-right: 4px; display: flex; align-items: center; justify-content: center; flex: none; position: relative; }
.w1 { margin-left: -4px; }
.tk.o { border: 1px solid #9fb2c2; background: rgba(190, 208, 222, .25); }
.tk.act { border-color: #e8eef3; background: rgba(215, 226, 234, .55); }
.w1 + .tk { margin-left: -6px; }
.tray { margin-left: 536px; }
.clock { margin-left: 19px; width: 58px; display: flex; flex-direction: column; align-items: center; color: #fff; line-height: 17px; }
```
FILE: script.js
```js
// Spread or tighten the letters of each label to its nominal width.
document.querySelectorAll('[data-w]').forEach(function (el) {
  var natural = el.getBoundingClientRect().width;
  var n = el.textContent.length;
  el.style.letterSpacing = ((Number(el.dataset.w) - natural) / n) + 'px';
});

// Horizontal ruler: centimetres counted from the left margin.
var cm = 49.19, x0 = 408.5, out = '';
out += '<rect x="285.5" y="147.5" width="1035" height="12" fill="#b1c9ec" stroke="#d5e4f8"/>';
out += '<rect x="409" y="148" width="787" height="11" fill="#fff"/>';
function tick(x, h) { return '<path d="M' + (Math.round(x) + 0.5) + ' ' + (153.5 - h / 2) + 'v' + h + '" stroke="#53596a"/>'; }
for (var q = -10; q <= 73; q++) {
  var x = x0 + q * cm / 4;
  if (q === 0 || q === 64) continue;
  if (q % 4 === 0) out += '<text class="rt" x="' + x + '" y="157">' + Math.abs(q / 4) + '</text>';
  else out += tick(x - 0.5, q % 2 === 0 ? 5 : 2);
}
for (var t = 592.5; t < 1150; t += 61.5) out += '<path d="M' + (Math.floor(t) + 0.5) + ' 161v3" stroke="#7d8797"/>';
out += '<path d="M549 154v5h5" fill="none" stroke="#24405f" stroke-width="2"/>';
out += '<g fill="#e3ebf8" stroke="#4f73ab"><path d="M404.500 144.500h8v3l-4 5-4-5zM404.500 160.500v-3l4-5 4 5v3z"/><path d="M404.500 160.500h8v5h-8z"/><path d="M1192.500 159.500v-3l4-4 4 4v3z"/></g>';
document.getElementById('hruler').innerHTML = out;

// Vertical ruler.
var v = '<rect x="5" y="166" width="14" height="672" fill="#d5e0f0"/><rect x="6" y="166" width="12" height="672" fill="#fff"/>';
for (var k = 4; k < 58; k++) {
  var y = 174.5 + (k - 4) * 49.19 / 4;
  if (k % 4 === 0) v += '<text class="rt" transform="translate(16 ' + y + ') rotate(-90)">' + k / 4 + '</text>';
  else { var w = k % 2 === 0 ? 5 : 2; v += '<path d="M' + (12.5 - w / 2) + ' ' + (Math.floor(y) + 0.5) + 'h' + w + '" stroke="#53596a"/>'; }
}
document.getElementById('vruler').innerHTML = v;
```
